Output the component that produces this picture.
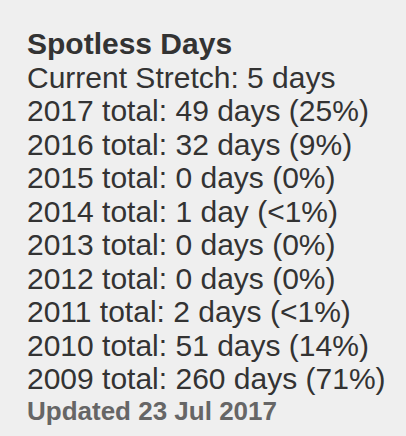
const rows = [
  "Current Stretch: 5 days",
  "2017 total: 49 days (25%)",
  "2016 total: 32 days (9%)",
  "2015 total: 0 days (0%)",
  "2014 total: 1 day (<1%)",
  "2013 total: 0 days (0%)",
  "2012 total: 0 days (0%)",
  "2011 total: 2 days (<1%)",
  "2010 total: 51 days (14%)",
  "2009 total: 260 days (71%)",
];

export default function App() {
  return (
    <div className="min-h-[436px] bg-[#efefef] pl-[27px] pt-[27px] text-[#333] font-['Liberation_Sans',Arial,sans-serif]">
      <h2 className="text-[30px] leading-[33.5px] font-bold">Spotless Days</h2>
      {rows.map((r) => (
        <div key={r} className="text-[30px] leading-[33.5px]">
          {r}
        </div>
      ))}
      <div className="text-[26px] leading-[30px] font-bold text-[#666]">Updated 23 Jul 2017</div>
    </div>
  );
}
